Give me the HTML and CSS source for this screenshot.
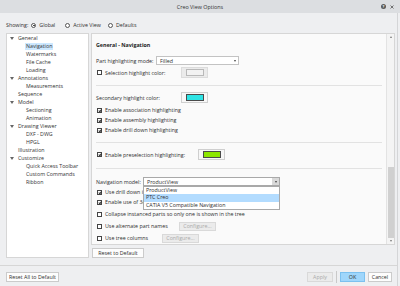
FILE: index.html
```html
<!DOCTYPE html>
<html>
<head>
<meta charset="utf-8">
<link rel="stylesheet" href="styles.css">
</head>
<body>
<div class="dialog">
  <div class="titlebar">
    <span></span>
    <span class="title">Creo View Options</span>
    <span class="tb-icons">
      <span class="help">?</span>
      <svg class="close" viewBox="0 0 4 4" width="4" height="4"><path d="M0.5 0.5L3.5 3.5M3.5 0.5L0.5 3.5" stroke="#555" stroke-width="0.8"/></svg>
    </span>
  </div>

  <div class="showing">
    <span>Showing:</span>
    <span class="radio on"></span><span>Global</span>
    <span class="radio r2"></span><span>Active View</span>
    <span class="radio r3"></span><span>Defaults</span>
  </div>

  <div class="main">
    <div class="tree">
      <div class="tn l0"><i class="tw"></i>General</div>
      <div class="tn l1"><span class="sel">Navigation</span></div>
      <div class="tn l1">Watermarks</div>
      <div class="tn l1">File Cache</div>
      <div class="tn l1">Loading</div>
      <div class="tn l0"><i class="tw"></i>Annotations</div>
      <div class="tn l1">Measurements</div>
      <div class="tn l0">Sequence</div>
      <div class="tn l0"><i class="tw"></i>Model</div>
      <div class="tn l1">Sectioning</div>
      <div class="tn l1">Animation</div>
      <div class="tn l0"><i class="tw"></i>Drawing Viewer</div>
      <div class="tn l1">DXF - DWG</div>
      <div class="tn l1">HPGL</div>
      <div class="tn l0">Illustration</div>
      <div class="tn l0"><i class="tw"></i>Customize</div>
      <div class="tn l1">Quick Access Toolbar</div>
      <div class="tn l1">Custom Commands</div>
      <div class="tn l1">Ribbon</div>
    </div>

    <div class="rightcol">
      <div class="panel">
        <div class="content">
          <div class="heading">General - Navigation</div>

          <div class="row r-part">
            <span class="lbl w-part">Part highlighting mode:</span>
            <div class="select s-filled"><span class="val">Filled</span><i class="caret"></i></div>
          </div>

          <div class="row r-sel">
            <span class="cb"></span>
            <span class="lbl w-sel">Selection highlight color:</span>
            <span class="swbtn dis"><span class="sw sw-dis"></span></span>
          </div>

          <div class="sep s1"></div>

          <div class="row r-sec">
            <span class="lbl w-sec">Secondary highlight color:</span>
            <span class="swbtn"><span class="sw sw-cyan"></span></span>
          </div>

          <div class="row r-cb first">
            <span class="cb on"></span>
            <span class="lbl">Enable association highlighting</span>
          </div>
          <div class="row r-cb">
            <span class="cb on"></span>
            <span class="lbl">Enable assembly highlighting</span>
          </div>
          <div class="row r-cb">
            <span class="cb on"></span>
            <span class="lbl">Enable drill down highlighting</span>
          </div>

          <div class="sep s2"></div>

          <div class="row r-pre">
            <span class="cb on"></span>
            <span class="lbl w-pre">Enable preselection highlighting:</span>
            <span class="swbtn"><span class="sw sw-green"></span></span>
          </div>

          <div class="sep s3"></div>

          <div class="row r-nav">
            <span class="lbl w-nav">Navigation model:</span>
            <div class="select s-nav">
              <span class="val">ProductView</span><span class="capbox"><i class="caret"></i></span>
              <div class="dropdown">
                <div class="opt">ProductView</div>
                <div class="opt hl">PTC Creo</div>
                <div class="opt">CATIA V5 Compatible Navigation</div>
              </div>
            </div>
          </div>

          <div class="row r-opt o1">
            <span class="cb on"></span>
            <span class="lbl">Use drill down in</span>
          </div>
          <div class="row r-opt">
            <span class="cb on"></span>
            <span class="lbl">Enable use of 3d</span>
          </div>
          <div class="row r-opt o3">
            <span class="cb"></span>
            <span class="lbl">Collapse instanced parts so only one is shown in the tree</span>
          </div>
          <div class="row r-opt o4">
            <span class="cb"></span>
            <span class="lbl w-alt">Use alternate part names</span>
            <button class="btn dis cfg">Configure...</button>
          </div>
          <div class="row r-opt o5">
            <span class="cb"></span>
            <span class="lbl w-tcol">Use tree columns</span>
            <button class="btn dis cfg">Configure...</button>
          </div>
        </div>

        <div class="scrollbar">
          <div class="sb-btn"><i class="up"></i></div>
          <div class="sb-track"><div class="sb-thumb"></div></div>
          <div class="sb-btn"><i class="down"></i></div>
        </div>
      </div>
      <button class="btn reset">Reset to Default</button>
    </div>
  </div>

  <div class="footer">
    <button class="btn resetall">Reset All to Default</button>
    <span class="spacer"></span>
    <button class="btn dis apply">Apply</button>
    <span class="vsep"></span>
    <button class="btn ok">OK</button>
    <button class="btn cancel">Cancel</button>
  </div>
</div>
</body>
</html>
```

FILE: styles.css
```css
* { box-sizing: border-box; }
html, body { margin: 0; padding: 0; }
body {
  width: 400px;
  height: 286px;
  overflow: hidden;
  background: #eeeff1;
  font-family: "Open Sans", "Noto Sans", sans-serif;
  font-size: 5.3px;
  line-height: 8px;
  color: #2e2e2e;
}
.dialog {
  height: 286px;
  display: flex;
  flex-direction: column;
  border-right: 1px solid #d4d5d7;
  width: 398px;
}

.titlebar {
  height: 13px;
  background: #dcdee1;
  display: grid;
  grid-template-columns: 1fr auto 1fr;
  align-items: center;
  width: 400px;
}
.title { font-size: 5.4px; color: #333; }
.tb-icons { justify-self: end; display: flex; align-items: center; gap: 4px; padding-right: 6px; }
.help {
  width: 5px; height: 5px; border-radius: 50%;
  background: #595959; color: #fff;
  font-size: 4px; line-height: 5px; text-align: center; font-weight: bold;
}
.close { display: block; }

.showing {
  height: 20px;
  padding: 4px 0 0 6px;
  display: flex;
  align-items: center;
  white-space: nowrap;
}
.radio {
  width: 5px; height: 5px;
  border: 0.7px solid #555;
  border-radius: 50%;
  background: #fff;
  margin: 0 3px 0 3px;
  position: relative;
}
.radio.on::after {
  content: "";
  position: absolute;
  left: 1px; top: 1px;
  width: 1.6px; height: 1.6px;
  border-radius: 50%;
  background: #333;
}
.r2 { margin-left: 10px; }
.r3 { margin-left: 7px; }

.main { display: flex; padding-left: 6px; gap: 2px; height: 225px; }

.tree {
  width: 83px;
  height: 225px;
  background: #fff;
  border: 1px solid #d6d6d6;
  color: #333;
}
.tn { height: 8px; line-height: 8px; display: flex; align-items: center; white-space: nowrap; }
.l0 { padding-left: 11px; }
.l1 { padding-left: 19px; }
.tw {
  width: 0; height: 0;
  border-left: 2px solid transparent;
  border-right: 2px solid transparent;
  border-top: 3px solid #666;
  margin-left: -8px;
  margin-right: 4px;
}
.sel { background: #cce8ff; margin-left: -1px; padding: 0 1px; line-height: 7px; }

.rightcol { width: 304px; display: flex; flex-direction: column; }
.panel {
  height: 212px;
  border: 1px solid #d6d6d6;
  background: #fafafa;
  display: flex;
}
.content { flex: 1; padding: 0 4px; min-width: 0; }

.heading { margin-top: 7px; height: 8px; font-weight: bold; color: #222; }

.row { display: flex; align-items: center; white-space: nowrap; }
.lbl { flex: none; }
.r-part { margin-top: 7px; height: 9px; }
.w-part { width: 60px; }
.r-sel { margin-top: 2px; height: 11px; }
.w-sel { width: 76px; }
.sep { height: 1px; background: #e2e2e2; }
.s1 { margin-top: 7px; }
.r-sec { margin-top: 6px; height: 11px; }
.w-sec { width: 85px; }
.r-cb { height: 10px; }
.r-cb.first { margin-top: 2px; }
.s2 { margin-top: 7px; }
.r-pre { margin-top: 6px; height: 11px; }
.w-pre { width: 93px; }
.s3 { margin-top: 8px; }
.r-nav { margin-top: 8px; height: 9px; }
.w-nav { width: 47px; }
.r-opt { height: 10px; }
.o1 { margin-top: 1px; }
.o3 { margin-top: 2px; }
.o4 { margin-top: 2px; }
.o5 { margin-top: 2px; }
.w-alt { width: 74px; }
.w-tcol { width: 57px; }

.cb {
  width: 5px; height: 5px;
  border: 0.7px solid #454545;
  background: #fff;
  margin-left: 1px;
  margin-right: 3px;
  flex: none;
  position: relative;
}
.cb.on::after {
  content: "";
  position: absolute;
  left: 1.2px;
  top: 0.2px;
  width: 1.2px;
  height: 2.3px;
  border-right: 0.7px solid #333;
  border-bottom: 0.7px solid #333;
  transform: rotate(40deg);
}

.select {
  height: 9px;
  background: #fff;
  border: 1px solid #c3c3c3;
  display: flex;
  align-items: center;
  position: relative;
}
.select .val { flex: 1; padding-left: 3px; }
.s-filled { width: 83px; }
.s-filled .caret { margin-right: 2px; }
.caret {
  width: 0; height: 0;
  border-left: 1.5px solid transparent;
  border-right: 1.5px solid transparent;
  border-top: 2px solid #444;
}
.s-nav { width: 137px; border-color: #a9a9a9; }
.capbox {
  width: 7px; height: 7px;
  background: #d9d9d9;
  display: flex; align-items: center; justify-content: center;
}
.dropdown {
  position: absolute;
  left: -1px; top: 8px;
  width: 137px;
  background: #fff;
  border: 1px solid #a9a9a9;
  z-index: 2;
}
.opt { height: 7.3px; line-height: 7.3px; padding-left: 2px; }
.opt.hl { background: #b3dcff; }

.swbtn {
  width: 27px; height: 11px;
  border: 1px solid #cfcfcf;
  background: #f7f7f7;
  display: flex; align-items: center; justify-content: center;
  flex: none;
}
.swbtn.dis { background: #ebebeb; border-color: #dcdcdc; }
.sw { width: 18px; height: 7px; border: 0.8px solid #4a4a4a; }
.sw-dis { background: #f2f2f2; border-color: #b9b9b9; }
.sw-cyan { background: #2ee3e4; }
.sw-green { background: #8ce600; }

.btn {
  font: inherit;
  color: #2e2e2e;
  padding: 0;
  margin: 0;
  height: 10px;
  line-height: 8px;
  background: #fdfdfd;
  border: 1px solid #cbcbcb;
  border-radius: 0;
  text-align: center;
  white-space: nowrap;
}
.btn.dis { background: #ebebeb; border-color: #d9d9d9; color: #a9a9a9; }
.cfg { width: 37px; height: 9px; line-height: 7px; }

.scrollbar {
  width: 8px;
  border-left: 1px solid #e3e3e3;
  background: #f4f4f4;
  display: flex;
  flex-direction: column;
}
.sb-btn { height: 6px; display: flex; align-items: center; justify-content: center; }
.up, .down { width: 0; height: 0; border-left: 1.5px solid transparent; border-right: 1.5px solid transparent; }
.up { border-bottom: 2px solid #777; }
.down { border-top: 2px solid #777; }
.sb-track { flex: 1; display: flex; flex-direction: column; justify-content: flex-end; padding: 0 0.5px; }
.sb-thumb { height: 71px; background: #d0d0d0; }

.reset { margin: 3px 0 0 1px; width: 52px; }

.footer {
  margin-top: 7px;
  border-top: 1px solid #d6d6d6;
  padding: 5px 5px 0 6px;
  display: flex;
  align-items: center;
}
.resetall { width: 53px; }
.spacer { flex: 1; }
.apply { width: 26px; }
.vsep { width: 1px; height: 12px; background: #c9c9c9; margin: 0 3px; }
.ok { width: 25px; background: #9fd6fb; border-color: #7cc1ef; }
.cancel { width: 24px; margin-left: 3px; }
```
